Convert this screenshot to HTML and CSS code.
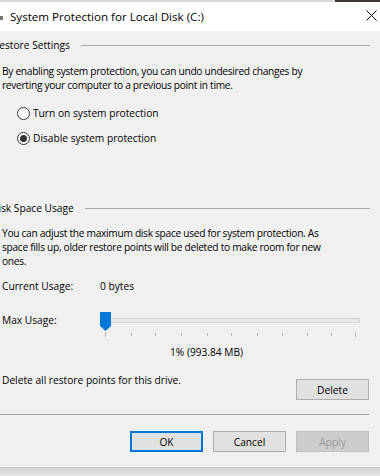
FILE: index.html
```html
<!DOCTYPE html>
<html lang="en">
<head>
    <meta charset="UTF-8">
    <meta name="viewport" content="width=device-width, initial-scale=1.0">
    <title>System Protection for Local Disk (C:)</title>
    <link rel="stylesheet" href="styles.css">
</head>
<body>

<div class="backdrop"><span class="backdrop-photo"></span></div>

<div class="dialog">
    <div class="titlebar">
        <span class="app-icon"></span>
        <span class="title">System Protection for Local Disk (C:)</span>
        <svg class="close" width="11" height="11" viewBox="0 0 11 11">
            <path d="M0.5 0.5 L10.5 10.5 M10.5 0.5 L0.5 10.5" stroke="#000" stroke-width="1" fill="none"/>
        </svg>
    </div>

    <div class="content">
        <div class="legend legend-restore"><span>Restore Settings</span><span class="rule"></span></div>
        <p class="desc">By enabling system protection, you can undo undesired changes by<br>reverting your computer to a previous point in time.</p>

        <label class="radio radio-first"><span class="circle"></span>Turn on system protection</label>
        <label class="radio radio-second"><span class="circle checked"></span>Disable system protection</label>

        <div class="legend legend-disk"><span>Disk Space Usage</span><span class="rule"></span></div>
        <p class="desc desc-disk">You can adjust the maximum disk space used for system protection. As<br>space fills up, older restore points will be deleted to make room for new<br>ones.</p>

        <div class="usage-row">
            <span class="usage-label">Current Usage:</span>
            <span>0 bytes</span>
        </div>

        <div class="slider-row">
            <span class="usage-label max-label">Max Usage:</span>
            <svg class="slider" width="262" height="28" viewBox="0 0 262 28">
                <rect x="10.5" y="8.5" width="249" height="4" fill="#e7e7e7" stroke="#d6d6d6"/>
                <g stroke="#b8b8b8" stroke-width="1">
                    <line x1="5.5" y1="22" x2="5.5" y2="27"/>
                    <line x1="31.5" y1="23" x2="31.5" y2="26"/>
                    <line x1="55.5" y1="23" x2="55.5" y2="26"/>
                    <line x1="81.5" y1="23" x2="81.5" y2="26"/>
                    <line x1="107.5" y1="23" x2="107.5" y2="26"/>
                    <line x1="131.5" y1="23" x2="131.5" y2="26"/>
                    <line x1="157.5" y1="23" x2="157.5" y2="26"/>
                    <line x1="182.5" y1="23" x2="182.5" y2="26"/>
                    <line x1="207.5" y1="23" x2="207.5" y2="26"/>
                    <line x1="231.5" y1="23" x2="231.5" y2="26"/>
                    <line x1="255.5" y1="22" x2="255.5" y2="27"/>
                </g>
                <path d="M0 2 H11 V16 L5.5 21 L0 16 Z" fill="#0078d7"/>
            </svg>
        </div>

        <div class="percent">1% (993.84 MB)</div>

        <div class="delete-row">
            <span class="delete-text">Delete all restore points for this drive.</span>
            <button class="btn btn-delete">Delete</button>
        </div>

        <div class="separator"></div>

        <div class="actions">
            <button class="btn btn-ok">OK</button>
            <button class="btn">Cancel</button>
            <button class="btn btn-disabled">Apply</button>
        </div>
    </div>
    <div class="shadow"></div>
</div>

</body>
</html>
```

FILE: styles.css
```css
body {
    margin: 0;
    width: 380px;
    height: 476px;
    overflow: hidden;
    font-family: "Open Sans", "Noto Sans", sans-serif;
    font-size: 10.2px;
    color: #000;
    background: #e9e9e9;
}
.backdrop {
    height: 2px;
    background: #d9d9d9;
    display: flex;
    justify-content: flex-end;
}
.backdrop-photo {
    width: 45px;
    background: #3b3632;
}
.titlebar {
    height: 29px;
    background: #fff;
    display: flex;
    align-items: center;
}
.app-icon {
    width: 3px;
    height: 4px;
    margin-top: 2px;
    background: #6f7a6a;
}
.title {
    margin-left: 7px;
    font-size: 11.6px;
    line-height: 16px;
    flex: 1;
}
.close {
    margin-right: 3px;
    margin-top: -2px;
}
.content {
    height: 436px;
    background: #f0f0f0;
    box-sizing: border-box;
    padding-top: 7px;
}
.legend {
    display: flex;
    align-items: center;
    height: 14px;
    line-height: 14px;
    width: 370px;
}
.legend span:first-child {
    white-space: nowrap;
}
.legend-restore span:first-child {
    margin-left: -7px;
}
.legend-disk {
    margin-top: 55px;
}
.legend-disk span:first-child {
    margin-left: -9px;
}
.rule {
    flex: 1;
    height: 1px;
    background: #a9a9a9;
    margin-left: 11px;
}
.desc {
    margin: 12px 0 0 2px;
    line-height: 14px;
    white-space: nowrap;
    letter-spacing: -0.3px;
}
.desc-disk {
    margin-top: 11px;
}
.radio {
    display: flex;
    align-items: center;
    height: 16px;
    padding-left: 17px;
}
.radio-first {
    margin-top: 13px;
}
.radio-second {
    margin-top: 9px;
}
.circle {
    width: 11px;
    height: 11px;
    border: 1px solid #333;
    border-radius: 50%;
    background: #fff;
    margin-right: 3px;
    display: flex;
    align-items: center;
    justify-content: center;
}
.circle.checked::after {
    content: "";
    width: 7px;
    height: 7px;
    border-radius: 50%;
    background: #333;
}
.usage-row {
    display: flex;
    margin: 11px 0 0 2px;
    line-height: 14px;
}
.usage-label {
    width: 98px;
}
.slider-row {
    display: flex;
    align-items: flex-start;
    margin: 17px 0 0 2px;
    height: 28px;
}
.max-label {
    margin-top: 3px;
    line-height: 14px;
}
.percent {
    margin: 7px 0 0 170px;
    line-height: 14px;
}
.delete-row {
    display: flex;
    align-items: flex-start;
    justify-content: space-between;
    margin: 14px 11px 0 2px;
    height: 27px;
}
.delete-text {
    line-height: 14px;
}
.btn {
    font-family: inherit;
    font-size: 10.2px;
    width: 73px;
    height: 21px;
    padding: 0;
    background: #e1e1e1;
    border: 1px solid #adadad;
    color: #000;
}
.btn-delete {
    margin-top: 6px;
}
.separator {
    margin-top: 14px;
    width: 369px;
    height: 1px;
    background: #a0a0a0;
}
.actions {
    display: flex;
    justify-content: flex-end;
    gap: 10px;
    margin: 16px 11px 0 0;
}
.btn-ok {
    border: 2px solid #0078d7;
}
.btn-disabled {
    background: #cccccc;
    border-color: #bfbfbf;
    color: #9a9a9a;
}
.shadow {
    height: 9px;
    background: linear-gradient(#cdcdcd, #e8e8e8);
}
```
